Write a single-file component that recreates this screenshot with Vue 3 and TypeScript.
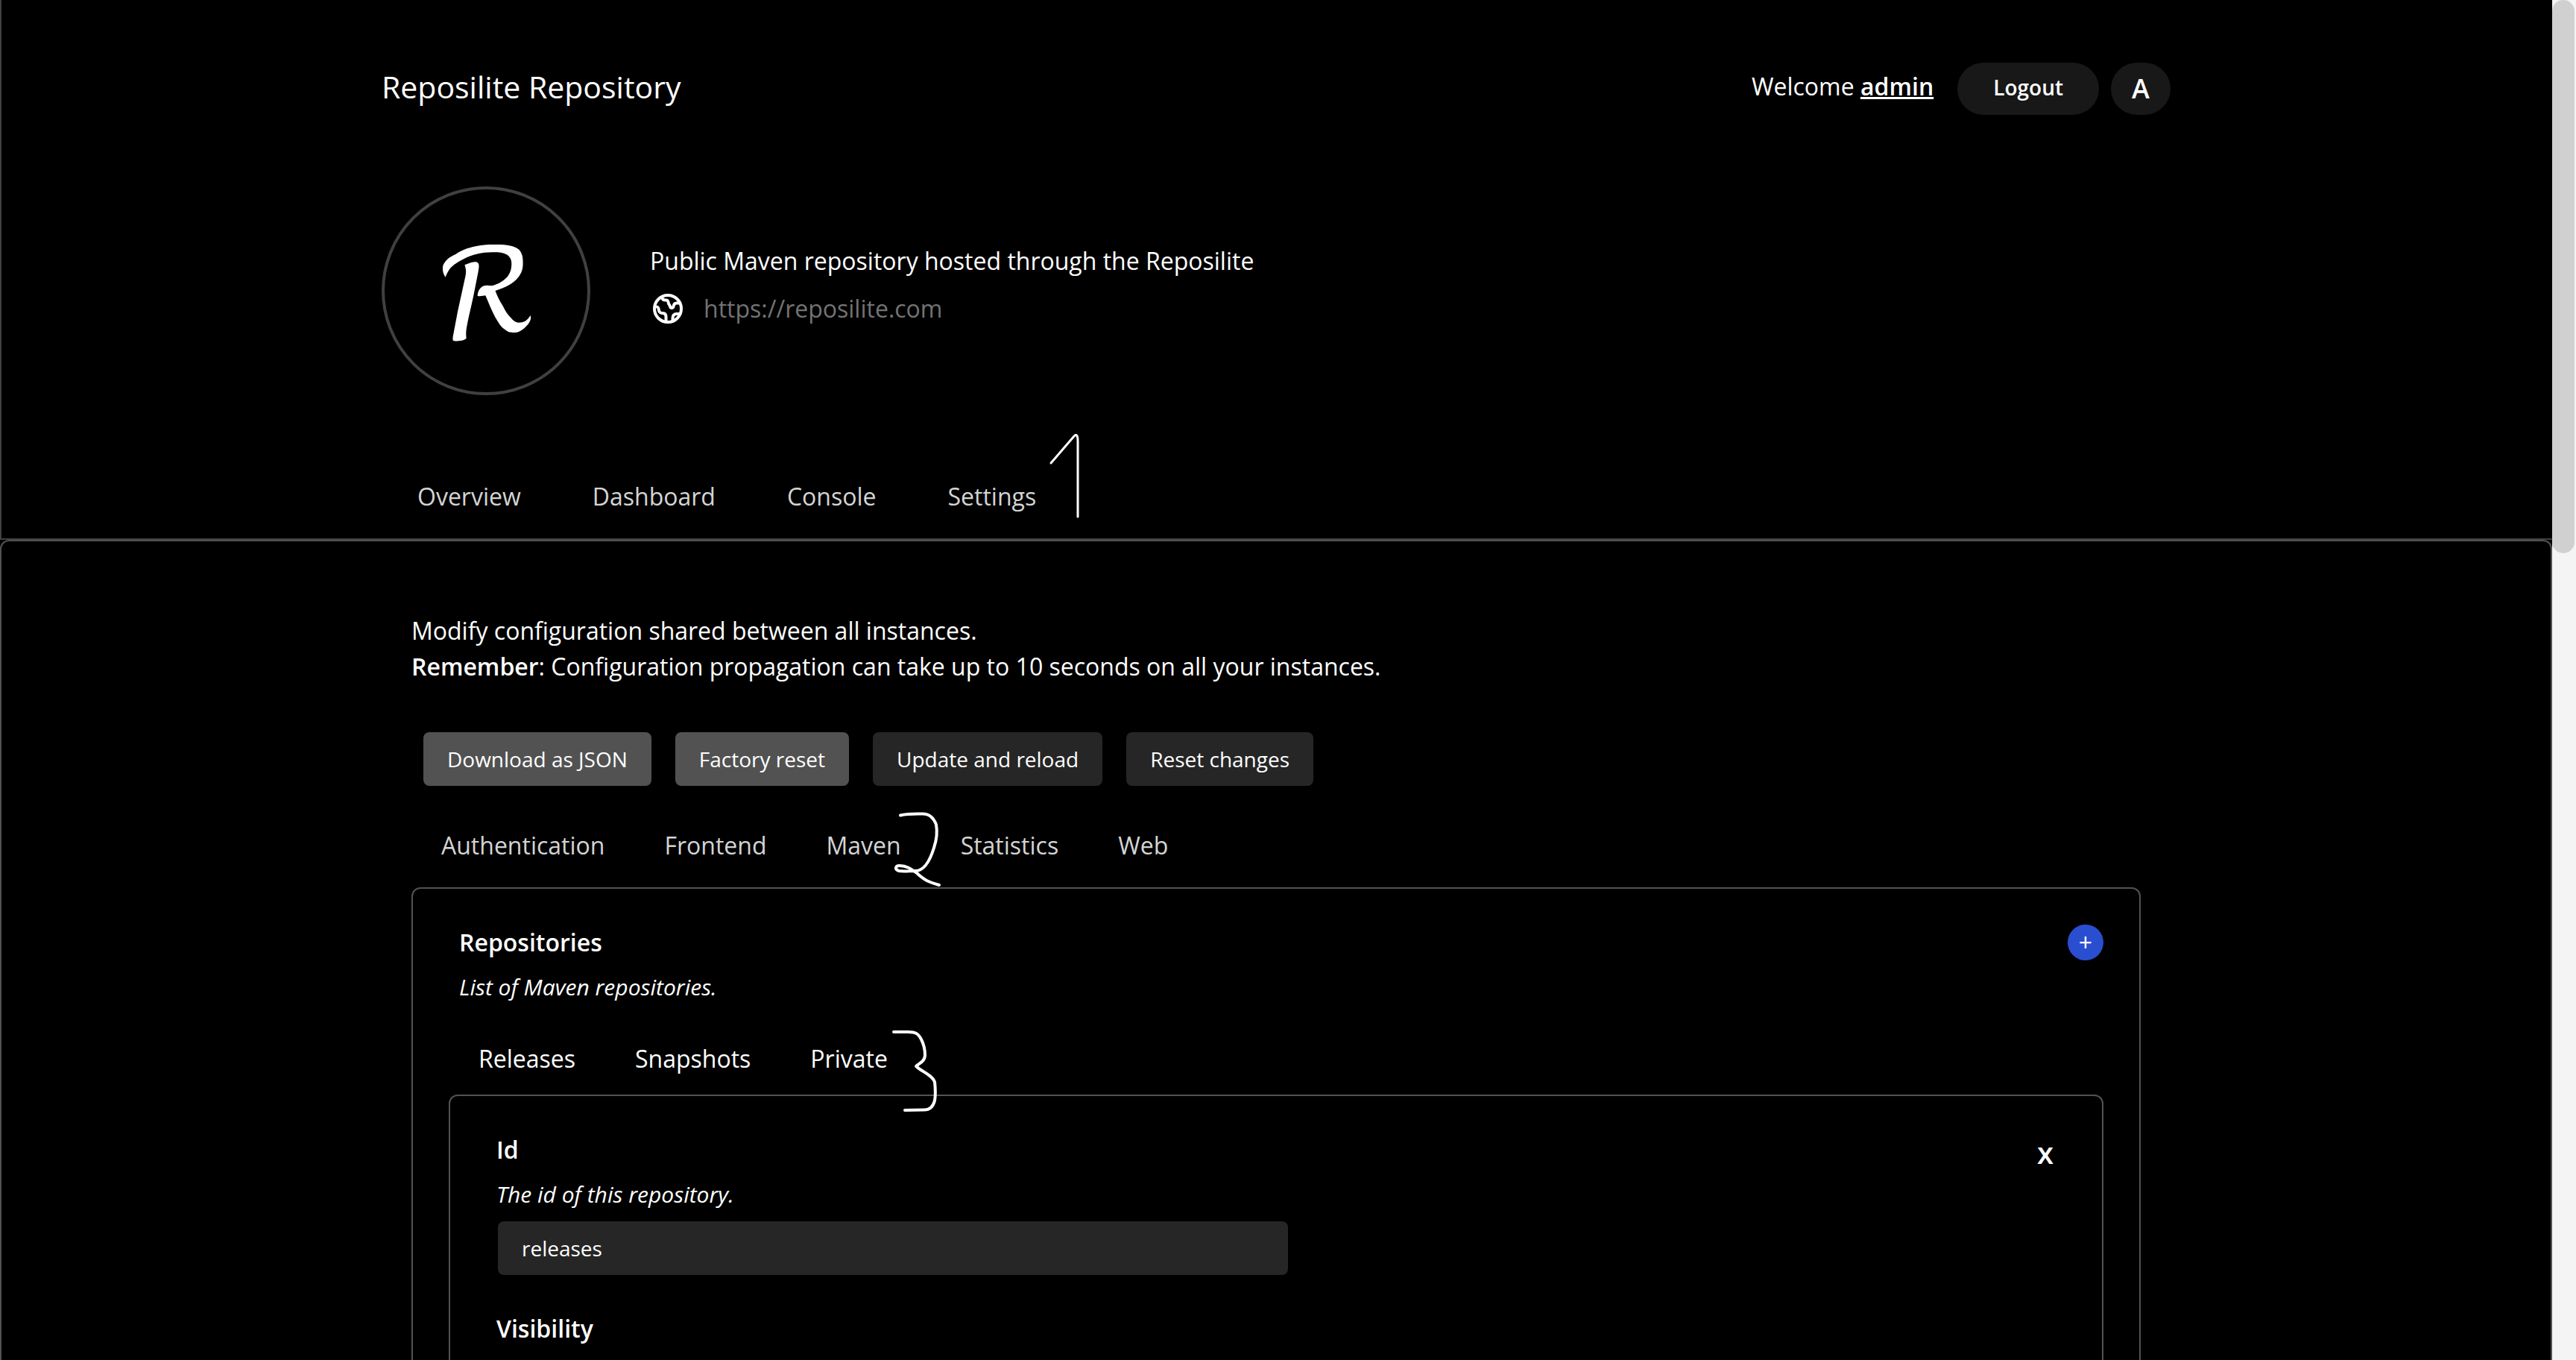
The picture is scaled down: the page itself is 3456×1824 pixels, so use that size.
<script setup lang="ts">
import { ref } from 'vue'

const pages: string[] = ['Overview', 'Dashboard', 'Console', 'Settings']
const domains: string[] = ['Authentication', 'Frontend', 'Maven', 'Statistics', 'Web']
const repositories: string[] = ['Releases', 'Snapshots', 'Private']
const repositoryId = ref<string>('releases')
</script>

<template>
  <div class="shell">
    <div class="page">
      <header class="hero">
        <div class="container">
          <div class="topbar">
            <h1 class="title">Reposilite Repository</h1>
            <div class="account">
              <span class="welcome">Welcome <b>admin</b></span>
              <button type="button" class="pill logout">Logout</button>
              <button type="button" class="pill theme" aria-label="Change theme">A</button>
            </div>
          </div>
          <div class="organization">
            <div class="logo">
              <svg viewBox="0 0 280 280" aria-hidden="true">
                <path d="M85.500 121.700C80 113 82 105 84 103C89 95 94 94 100 90.500C108 85 116 82.500 125 80.500C134 78.300 142 78 150 78C157 78 163 78 168 78.800C176 80 180 81.500 184 84.500C188.500 89 189.600 95 189.600 102C189.600 108 189 111 187.500 115C184 123 178 128 171.400 132C165 136 159 137.500 152.500 140C155 147 158 153 162.500 160C166 167 169 172 173.200 176C177 180.500 180 182.700 184 182.700C187 182.700 190 182.300 193 180.500C196 178.500 198 175.500 199.500 173C200.300 175 200.200 177 199.700 179C198 183.500 195 187 191 190.500C187 194 183 196 178.600 196C174 196 171 196 167.500 193.500C164 191 162 190 159 186C154 179 150 171 146.400 163L139.300 146.300C136 146.300 132 148 128.600 146.700C129 142.500 130 139 132.500 136.500C136 132 142 132.500 148.200 133.300C157 131 165 126 169.600 120C173 115 174.300 110 174.300 104C174.300 98 172 94 168 91.500C162 88 155 88.300 148.200 88.300C141 88.500 135 88.700 128.600 90.500C122 92 116 94 110.700 97C103 101 96 105 91.500 110.500C89 114 87 118 85.500 121.700Z" />
                <path d="M111.400 105C115 104.500 120 101.300 125 101.300C129 101.300 130.400 103 130.500 106C130.700 109 130 112 129.500 115L123.200 147C120 162 115 182 113.500 193C113 198 113.500 201 113.600 204C111 206 108 207 105.400 207C102 207.500 98 207.700 95.700 206.700C95 203 96 200 96.500 197L102 168L112.500 120C114 113 112.500 109 111.400 105Z" />
              </svg>
            </div>
            <div class="about">
              <p>Public Maven repository hosted through the Reposilite</p>
              <a class="website" href="https://reposilite.com">
                <svg viewBox="4 4 48 48" aria-hidden="true">
                  <circle cx="28" cy="28" r="18" />
                  <path d="M20.500 12C20 16 22.500 16.500 25 16.500C28.500 16.500 28.500 18.500 29 21C29.500 23 30.500 22.500 31 25C31.500 27.500 35 27.500 35.500 25C36 22 37 20.500 39.500 20.500H44" />
                  <path d="M10.500 25.500C14 25 15 25.500 15.500 28C16 33 18 34 21 34C24.500 34 25.500 36 25.500 39V45.500" />
                  <path d="M34.500 44.500V40.500C34.500 37 36.500 35 39.500 35H44.500" />
                </svg>
                <span>https://reposilite.com</span>
              </a>
            </div>
          </div>
          <nav class="tabs main-tabs" aria-label="Pages">
            <a v-for="page in pages" :key="page" href="#">{{ page }}</a>
          </nav>
        </div>
      </header>

      <main class="content">
        <div class="container settings">
          <p>Modify configuration shared between all instances.</p>
          <p><b>Remember</b>: Configuration propagation can take up to 10 seconds on all your instances.</p>
          <div class="actions">
            <button type="button" class="light">Download as JSON</button>
            <button type="button" class="light">Factory reset</button>
            <button type="button">Update and reload</button>
            <button type="button">Reset changes</button>
          </div>
          <nav class="tabs" aria-label="Configuration domains">
            <a v-for="domain in domains" :key="domain" href="#">{{ domain }}</a>
          </nav>
          <section class="panel">
            <div class="heading">
              <h2>Repositories</h2>
              <button type="button" class="add" aria-label="Add repository">+</button>
            </div>
            <p class="description">List of Maven repositories.</p>
            <nav class="tabs repository-tabs" aria-label="Repositories">
              <a v-for="repository in repositories" :key="repository" href="#">{{ repository }}</a>
            </nav>
            <section class="panel">
              <div class="heading">
                <h3><label for="repository-id">Id</label></h3>
                <button type="button" class="remove" aria-label="Remove repository">x</button>
              </div>
              <p class="description">The id of this repository.</p>
              <input id="repository-id" v-model="repositoryId" type="text" />
              <h3 class="field">Visibility</h3>
            </section>
          </section>
        </div>
      </main>

      <!-- Handwritten step marks beside the tabs -->
      <svg class="marks" viewBox="512 0 2400 1824" aria-hidden="true">
        <path class="thin" d="M1410 621L1441 585Q1446 580 1446 592V693" />
        <path d="M1208 1093.500C1218 1091 1228 1091.500 1238 1091.500C1248 1091.500 1253 1098 1256 1106C1258 1117 1257 1125 1253 1137C1249 1150 1242 1168 1228 1168C1220 1168 1212 1169 1206 1168C1200 1166 1201 1161 1207 1161C1216 1161 1222 1165 1230 1171C1241 1181 1246 1183 1260 1187" />
        <path d="M1199 1384H1218C1228 1384 1232 1386 1236 1394C1240 1402 1241 1408 1241 1415C1241 1423 1234 1426 1229 1430C1236 1437 1250 1441 1254 1451C1255 1460 1255 1470 1254 1476C1252 1484 1248 1488.500 1240 1488.500L1214 1489" />
      </svg>
    </div>
    <div class="scrollbar"><div class="thumb"></div></div>
  </div>
</template>

<style>
body {
  margin: 0;
  background: #000;
}
</style>

<style scoped>
.shell {
  display: flex;
  height: 100vh;
  overflow: hidden;
  background: #000;
  color: #fff;
  font-family: "Open Sans", "Noto Sans", sans-serif;
  font-size: 32px;
  line-height: 48px;
}

.page {
  position: relative;
  flex: 1;
  min-width: 0;
  overflow: hidden;
}

.container {
  box-sizing: border-box;
  max-width: 2400px;
  margin: 0 auto;
}

h1,
h2,
h3,
p {
  margin: 0;
  font-size: inherit;
}

h2,
h3,
b {
  font-weight: 600;
}

a {
  color: inherit;
  text-decoration: none;
}

button,
input {
  box-sizing: border-box;
  border: 0;
  color: inherit;
  font-family: inherit;
  font-size: 28px;
}

button {
  padding: 0;
  line-height: 40px;
  cursor: pointer;
}

.hero {
  padding-top: 84px;
  border-bottom: 2px solid #404040;
  box-shadow: inset 2px 0 #404040;
}

.topbar {
  display: flex;
  justify-content: space-between;
  align-items: flex-start;
}

.title {
  font-size: 41px;
  font-weight: 400;
  line-height: 64px;
}

.account {
  display: flex;
}

.welcome {
  margin-right: 32px;
  line-height: 64px;
}

.welcome b {
  text-decoration: underline;
}

.pill {
  height: 70px;
  border-radius: 35px;
  background: #181818;
  font-weight: 600;
}

.logout {
  padding: 0 48px 4px;
}

.theme {
  width: 80px;
  margin-left: 16px;
  font-size: 36px;
}

.organization {
  display: flex;
  align-items: center;
  gap: 80px;
  margin-top: 96px;
}

.logo {
  box-sizing: border-box;
  width: 280px;
  height: 280px;
  border: 4px solid #404040;
  border-radius: 50%;
}

.logo svg {
  display: block;
  width: 280px;
  height: 280px;
  margin: -4px;
  fill: #fff;
}

.about {
  padding-bottom: 16px;
}

.website {
  display: flex;
  gap: 24px;
  margin-top: 16px;
  color: #737373;
}

.website svg {
  width: 48px;
  height: 48px;
  fill: none;
  stroke: #fff;
  stroke-width: 4;
}

.tabs {
  display: flex;
  color: #d4d4d4;
}

.tabs a {
  padding: 0 40px 32px;
}

.main-tabs {
  margin-top: 112px;
}

.main-tabs a {
  padding: 0 48px 32px;
}

.content {
  border: 2px solid #525252;
  border-radius: 12px;
  padding: 96px 0;
}

.settings {
  padding: 0 40px;
}

.actions {
  display: flex;
  gap: 32px;
  margin: 64px 16px 56px;
}

.actions button {
  height: 72px;
  padding: 0 32px;
  border-radius: 8px;
  background: #262626;
}

.actions .light {
  background: #525252;
}

.panel {
  border: 2px solid #525252;
  border-radius: 12px;
  padding: 48px;
}

.heading {
  display: flex;
  justify-content: space-between;
  margin-left: 14px;
}

.add {
  width: 48px;
  height: 48px;
  border-radius: 50%;
  background: #2a4ed0;
  font-size: 32px;
}

.remove {
  width: 24px;
  height: 56px;
  margin-right: 16px;
  background: none;
  font-size: 40px;
  font-weight: 600;
}

.description {
  margin: 16px 14px 0;
  font-size: 30px;
  font-style: italic;
  line-height: 40px;
}

.repository-tabs {
  margin-top: 52px;
  color: #fff;
}

.repository-tabs a {
  padding-bottom: 24px;
}

.panel .panel .heading {
  height: 48px;
}

.panel input {
  display: block;
  width: 50%;
  height: 72px;
  margin: 16px 16px 0;
  padding: 0 32px;
  border-radius: 8px;
  background: #262626;
}

.field {
  margin: 48px 14px 0;
}

.marks {
  position: absolute;
  top: 0;
  left: 50%;
  width: 2400px;
  height: 1824px;
  margin-left: -1200px;
  fill: none;
  stroke: #fff;
  stroke-width: 4;
  stroke-linecap: round;
  stroke-linejoin: round;
  pointer-events: none;
}

.marks .thin {
  stroke-width: 3;
}

.scrollbar {
  box-sizing: border-box;
  width: 32px;
  padding-right: 2px;
  background: #f4f4f4;
}

.thumb {
  height: 742px;
  border-radius: 16px;
  background: #d0d0d0;
}
</style>
